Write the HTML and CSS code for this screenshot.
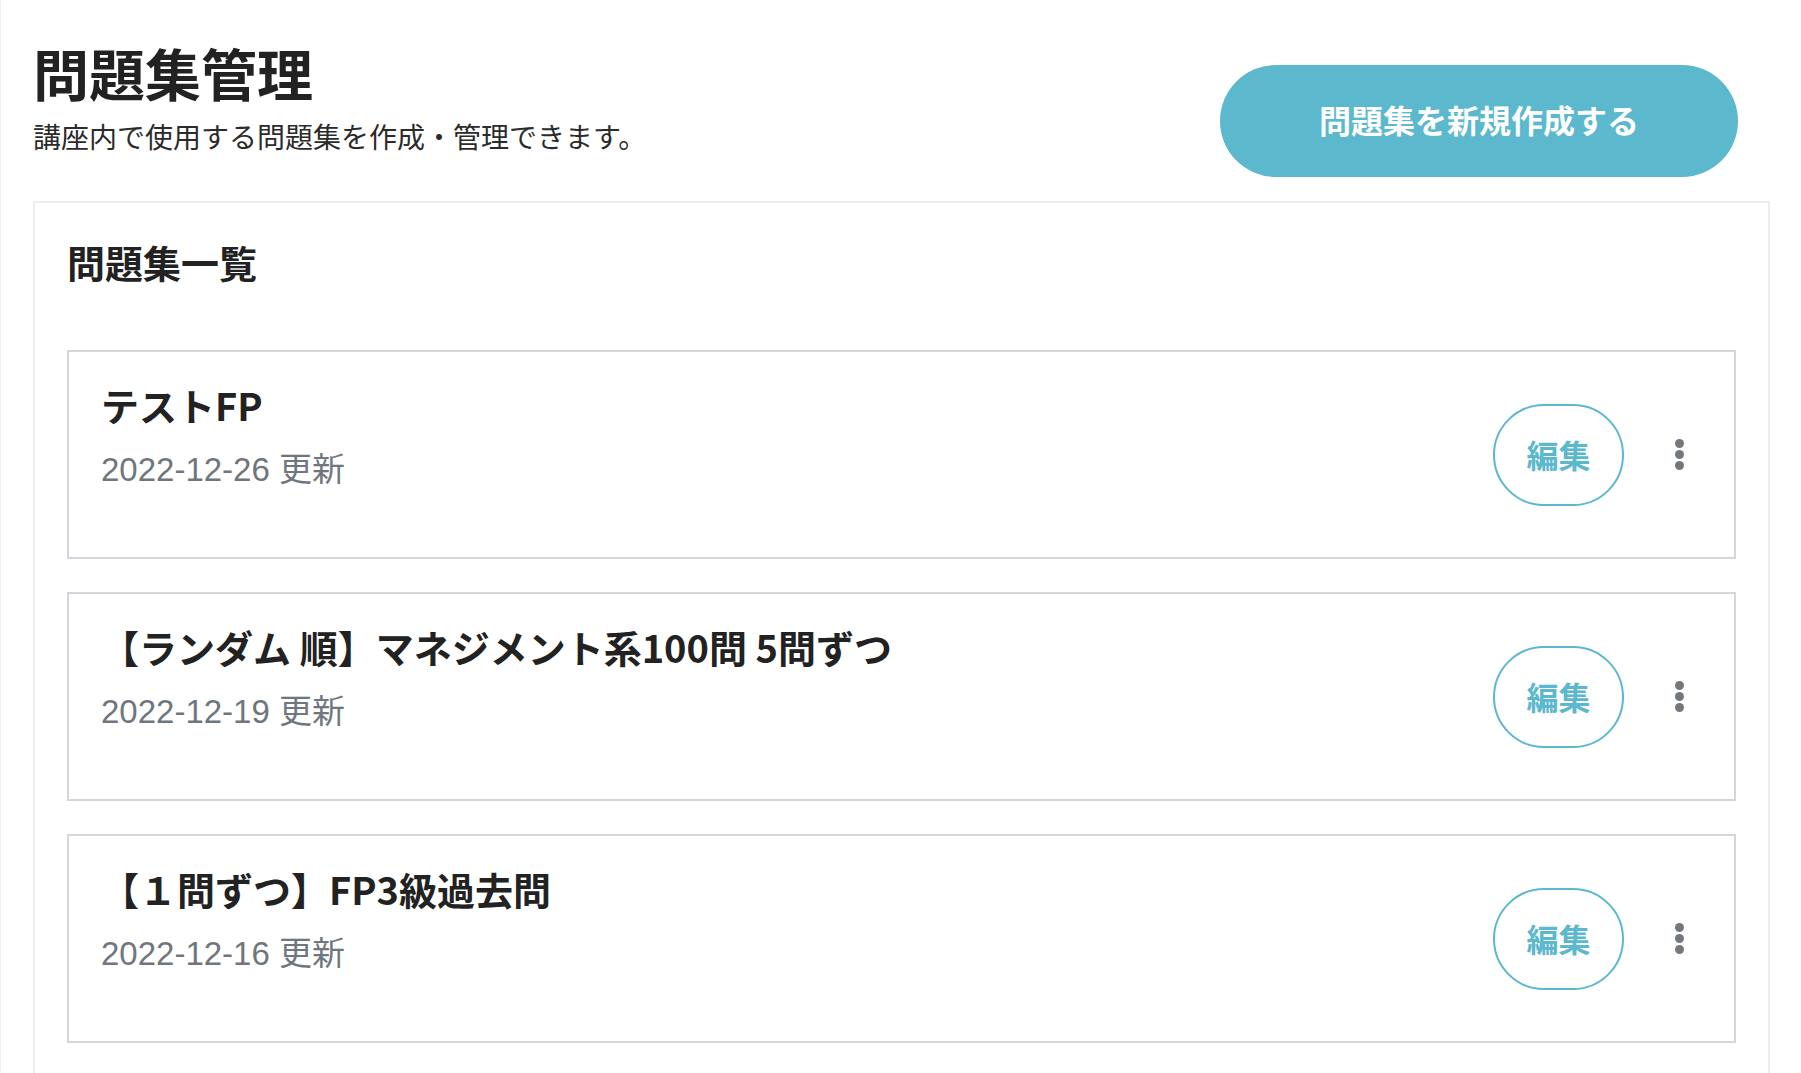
FILE: index.html
```html
<!DOCTYPE html>
<html lang="ja">
<head>
<meta charset="utf-8">
<title>問題集管理</title>
<link rel="stylesheet" href="styles.css">
</head>
<body>
<div class="page">
  <header class="page-header">
    <div class="page-heading">
      <h1 class="page-title">問題集管理</h1>
      <p class="page-desc">講座内で使用する問題集を作成・管理できます。</p>
    </div>
    <button class="btn-create" type="button">問題集を新規作成する</button>
  </header>

  <section class="panel">
    <h2 class="panel-title">問題集一覧</h2>
    <ul class="set-list">
      <li class="set-item">
        <div class="set-info">
          <div class="set-name">テストFP</div>
          <div class="set-date">2022-12-26 更新</div>
        </div>
        <div class="set-actions">
          <button class="btn-edit" type="button">編集</button>
          <button class="btn-more" type="button" aria-label="その他"><span></span><span></span><span></span></button>
        </div>
      </li>
      <li class="set-item">
        <div class="set-info">
          <div class="set-name">【ランダム 順】マネジメント系100問 5問ずつ</div>
          <div class="set-date">2022-12-19 更新</div>
        </div>
        <div class="set-actions">
          <button class="btn-edit" type="button">編集</button>
          <button class="btn-more" type="button" aria-label="その他"><span></span><span></span><span></span></button>
        </div>
      </li>
      <li class="set-item">
        <div class="set-info">
          <div class="set-name">【１問ずつ】FP3級過去問</div>
          <div class="set-date">2022-12-16 更新</div>
        </div>
        <div class="set-actions">
          <button class="btn-edit" type="button">編集</button>
          <button class="btn-more" type="button" aria-label="その他"><span></span><span></span><span></span></button>
        </div>
      </li>
    </ul>
  </section>
</div>
</body>
</html>
```
FILE: styles.css
```css
* {
  box-sizing: border-box;
}

html, body {
  margin: 0;
  padding: 0;
  background: #ffffff;
}

body {
  font-family: "Noto Sans CJK JP", "Noto Sans", "Liberation Sans", sans-serif;
  color: #222222;
  border-left: 1px solid #f1f1f4;
  min-height: 100vh;
}

.page {
  padding: 0 31px 0 32px;
}

.page-header {
  display: flex;
  justify-content: space-between;
  align-items: flex-start;
  padding: 38px 32px 0 0;
}

.page-title {
  margin: 0;
  font-size: 56px;
  line-height: 1.2;
  font-weight: 700;
  color: #222222;
}

.page-desc {
  margin: 10px 0 0;
  font-size: 28px;
  line-height: 1.5;
  color: #2b2b2b;
}

.btn-create {
  margin-top: 27px;
  width: 518px;
  height: 112px;
  border: none;
  border-radius: 56px;
  background: #5cb8cd;
  color: #ffffff;
  font-family: inherit;
  font-size: 32px;
  font-weight: 700;
  padding: 0 0 4px;
  cursor: pointer;
}

.panel {
  margin-top: 24px;
  border: 2px solid #ebebf0;
  border-bottom: none;
  padding: 30px 32px 40px 32px;
}

.panel-title {
  margin: 0 0 60px;
  font-size: 38px;
  line-height: 1.5;
  font-weight: 700;
  color: #222222;
}

.set-list {
  list-style: none;
  margin: 0;
  padding: 0;
  display: flex;
  flex-direction: column;
  gap: 33px;
}

.set-item {
  display: flex;
  align-items: center;
  justify-content: space-between;
  border: 2px solid #d3d7db;
  padding: 24px 50px 60px 32px;
  position: relative;
  min-height: 209px;
}

.set-info {
  display: flex;
  flex-direction: column;
  align-self: flex-start;
}

.set-name {
  font-size: 38px;
  line-height: 1.5;
  font-weight: 700;
  color: #222222;
}

.set-date {
  margin-top: 13px;
  font-family: "Liberation Sans", "Noto Sans CJK JP", sans-serif;
  font-size: 33px;
  line-height: 1.45;
  color: #6f767d;
}

.set-actions {
  position: absolute;
  right: 50px;
  top: 0;
  bottom: 0;
  display: flex;
  align-items: center;
  gap: 50px;
}

.btn-edit {
  width: 131px;
  height: 102px;
  border: 2px solid #5cb8cd;
  border-radius: 51px;
  background: #ffffff;
  color: #5cb8cd;
  font-family: inherit;
  font-size: 32px;
  font-weight: 700;
  cursor: pointer;
  padding: 0 0 2px;
}

.btn-more {
  display: flex;
  flex-direction: column;
  align-items: center;
  gap: 2px;
  width: 10px;
  padding: 0;
  border: none;
  background: transparent;
  cursor: pointer;
}

.btn-more span {
  display: block;
  width: 9px;
  height: 9px;
  border-radius: 50%;
  background: #73787f;
}
```
